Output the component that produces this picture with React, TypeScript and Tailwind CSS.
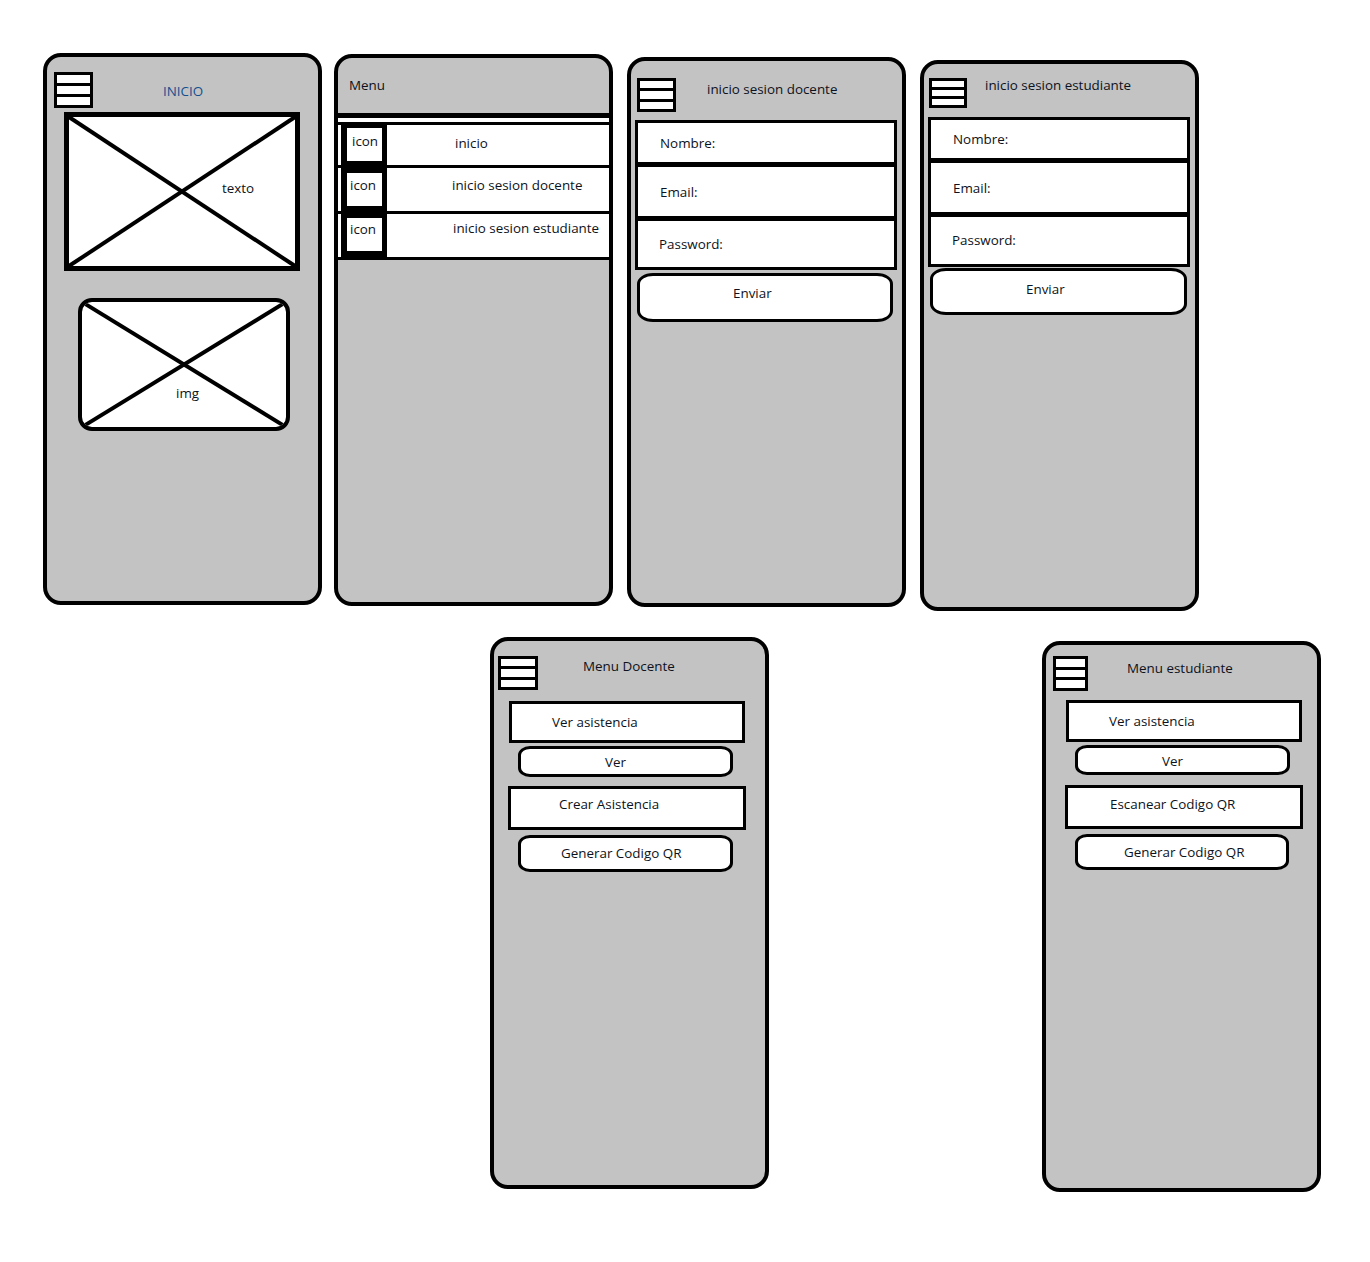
const PHONE = 'flex flex-col shrink-0 w-[279px] border-4 border-black rounded-[18px] bg-[#c3c3c3]'
const BOX = 'shrink-0 border-[3px] border-black bg-white whitespace-nowrap'
const PILL = 'shrink-0 border-[3px] border-black rounded-[12px/9px] bg-white whitespace-nowrap'

function Hamburger({ className }: { className: string }) {
  return (
    <div className={`flex flex-col gap-[3px] border-[3px] border-black bg-black shrink-0 ${className}`}>
      <div className="flex-1 bg-white" />
      <div className="flex-1 bg-white" />
      <div className="flex-1 bg-white" />
    </div>
  )
}

function Cross({ stroke }: { stroke: number }) {
  return (
    <svg className="absolute inset-0 w-full h-full" viewBox="0 0 100 100" preserveAspectRatio="none">
      <line x1="0" y1="0" x2="100" y2="100" stroke="black" strokeWidth={stroke} vectorEffect="non-scaling-stroke" />
      <line x1="100" y1="0" x2="0" y2="100" stroke="black" strokeWidth={stroke} vectorEffect="non-scaling-stroke" />
    </svg>
  )
}

const menuRows = [
  { label: 'inicio', row: 'h-[43px]', icon: 'mt-[3px] pl-[5px] pt-[4px]', text: 'pl-[68px] pt-[9px]' },
  { label: 'inicio sesion docente', row: 'h-[46px]', icon: 'mt-[5px] pl-[3px] pt-[3px]', text: 'pl-[65px] pt-[8px]' },
  { label: 'inicio sesion estudiante', row: 'h-[46px]', icon: 'mt-[4px] pl-[3px] pt-[2px]', text: 'pl-[66px] pt-[5px]' },
]

export default function App() {
  return (
    <div className="w-[1370px] h-[1262px] bg-white font-['Open_Sans','Noto_Sans',sans-serif] text-[13.4px] leading-[18px] text-[#0c1220]">
      <div className="flex items-start pl-[43px]">
        {/* inicio */}
        <div className={`${PHONE} mt-[53px] h-[552px]`}>
          <div className="flex items-start">
            <Hamburger className="ml-[7px] mt-[15px] w-[39px] h-[36px]" />
            <span className="ml-[70px] mt-[25px] text-[#13508f]">INICIO</span>
          </div>
          <div className="relative ml-[17px] mt-[4px] w-[236px] h-[159px] border-[5px] border-black bg-white">
            <Cross stroke={4} />
            <span className="relative block pl-[153px] pt-[62px]">texto</span>
          </div>
          <div className="relative ml-[31px] mt-[27px] w-[212px] h-[133px] border-4 border-black rounded-[14px] bg-white overflow-hidden">
            <Cross stroke={4} />
            <span className="relative block pl-[94px] pt-[82px]">img</span>
          </div>
        </div>

        {/* menu */}
        <div className={`${PHONE} ml-[12px] mt-[54px] h-[552px] overflow-hidden`}>
          <div className="h-[55px] pl-[11px] pt-[18px]">Menu</div>
          <div className="h-[5px] bg-black" />
          <div className="h-[4px] bg-white" />
          <div className="h-[3px] bg-black" />
          {menuRows.map((r) => (
            <div key={r.label} className={`flex ${r.row} border-b-[3px] border-black bg-black`}>
              <div className="w-[3px] bg-white" />
              <div className="w-[6px]" />
              <div className={`w-[35px] h-[33px] bg-white ${r.icon}`}>icon</div>
              <div className="w-[5px]" />
              <div className={`flex-1 bg-white whitespace-nowrap ${r.text}`}>{r.label}</div>
            </div>
          ))}
        </div>

        {/* inicio sesion docente */}
        <div className={`${PHONE} ml-[14px] mt-[57px] h-[550px]`}>
          <div className="flex items-start">
            <Hamburger className="ml-[6px] mt-[17px] w-[39px] h-[34px]" />
            <span className="ml-[31px] mt-[19px] whitespace-nowrap">inicio sesion docente</span>
          </div>
          <div className="flex flex-col gap-[5px] ml-[4px] mt-[8px] w-[262px] border-[3px] border-black bg-black">
            <div className="h-[39px] bg-white pl-[22px] pt-[11px]">Nombre:</div>
            <div className="h-[49px] bg-white pl-[22px] pt-[16px]">Email:</div>
            <div className="h-[46px] bg-white pl-[21px] pt-[14px]">Password:</div>
          </div>
          <div className={`${PILL} ml-[6px] mt-[3px] w-[256px] h-[49px] rounded-[16px/11px] pl-[93px] pt-[8px]`}>Enviar</div>
        </div>

        {/* inicio sesion estudiante */}
        <div className={`${PHONE} ml-[14px] mt-[60px] h-[551px]`}>
          <div className="flex items-start">
            <Hamburger className="ml-[5px] mt-[14px] w-[38px] h-[30px]" />
            <span className="ml-[18px] mt-[12px] whitespace-nowrap">inicio sesion estudiante</span>
          </div>
          <div className="flex flex-col gap-[5px] ml-[4px] mt-[9px] w-[262px] border-[3px] border-black bg-black">
            <div className="h-[38px] bg-white pl-[22px] pt-[10px]">Nombre:</div>
            <div className="h-[49px] bg-white pl-[22px] pt-[16px]">Email:</div>
            <div className="h-[47px] bg-white pl-[21px] pt-[14px]">Password:</div>
          </div>
          <div className={`${PILL} ml-[6px] mt-[1px] w-[257px] h-[47px] rounded-[16px/11px] pl-[93px] pt-[9px]`}>Enviar</div>
        </div>
      </div>

      <div className="flex items-start pl-[490px]">
        {/* menu docente */}
        <div className={`${PHONE} mt-[26px] h-[552px]`}>
          <div className="flex items-start">
            <Hamburger className="ml-[4px] mt-[15px] w-[40px] h-[34px]" />
            <span className="ml-[45px] mt-[16px] whitespace-nowrap">Menu Docente</span>
          </div>
          <div className={`${BOX} ml-[15px] mt-[11px] w-[236px] h-[42px] pl-[40px] pt-[9px]`}>Ver asistencia</div>
          <div className={`${PILL} ml-[24px] mt-[3px] w-[215px] h-[31px] pl-[84px] pt-[4px]`}>Ver</div>
          <div className={`${BOX} ml-[14px] mt-[9px] w-[238px] h-[44px] pl-[48px] pt-[6px]`}>Crear Asistencia</div>
          <div className={`${PILL} ml-[24px] mt-[5px] w-[215px] h-[37px] pl-[40px] pt-[6px]`}>Generar Codigo QR</div>
        </div>

        {/* menu estudiante */}
        <div className={`${PHONE} ml-[273px] mt-[30px] h-[551px]`}>
          <div className="flex items-start">
            <Hamburger className="ml-[7px] mt-[11px] w-[35px] h-[35px]" />
            <span className="ml-[39px] mt-[14px] whitespace-nowrap">Menu estudiante</span>
          </div>
          <div className={`${BOX} ml-[20px] mt-[9px] w-[236px] h-[42px] pl-[40px] pt-[9px]`}>Ver asistencia</div>
          <div className={`${PILL} ml-[29px] mt-[3px] w-[215px] h-[30px] pl-[84px] pt-[4px]`}>Ver</div>
          <div className={`${BOX} ml-[19px] mt-[10px] w-[238px] h-[44px] pl-[42px] pt-[7px]`}>Escanear Codigo QR</div>
          <div className={`${PILL} ml-[29px] mt-[5px] w-[214px] h-[36px] pl-[46px] pt-[6px]`}>Generar Codigo QR</div>
        </div>
      </div>
    </div>
  )
}
